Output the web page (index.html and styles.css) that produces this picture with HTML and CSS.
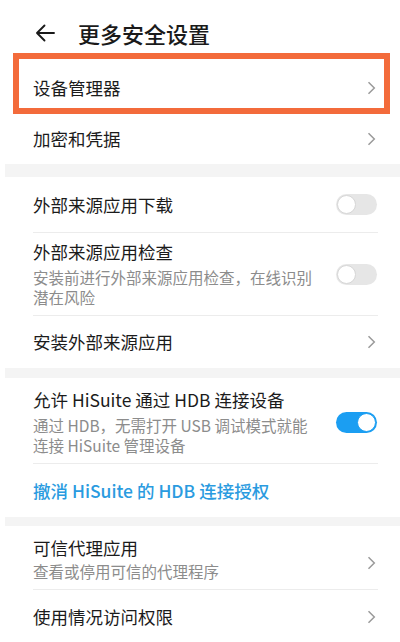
FILE: index.html
```html
<!DOCTYPE html>
<html lang="zh-CN">
<head>
<meta charset="utf-8">
<title>更多安全设置</title>
<link rel="stylesheet" href="styles.css">
</head>
<body>
<div class="page">
  <header class="header">
    <svg class="back" width="20" height="18" viewBox="0 0 20 18" aria-hidden="true">
      <path d="M19 9H2M9.5 1.5L2 9l7.5 7.5" fill="none" stroke="#1a1a1a" stroke-width="1.9" stroke-linecap="round" stroke-linejoin="round"/>
    </svg>
    <h1 class="title">更多安全设置</h1>
  </header>

  <div class="row row-first">
    <span class="label">设备管理器</span>
    <svg class="chev" width="9" height="14" viewBox="0 0 9 14"><path d="M1.5 1.2L7.3 7l-5.8 5.8" fill="none" stroke="#9a9a9a" stroke-width="1.5"/></svg>
    <div class="highlight"></div>
  </div>
  <div class="row row-second">
    <span class="label">加密和凭据</span>
    <svg class="chev" width="9" height="14" viewBox="0 0 9 14"><path d="M1.5 1.2L7.3 7l-5.8 5.8" fill="none" stroke="#9a9a9a" stroke-width="1.5"/></svg>
  </div>

  <div class="band band-a"></div>

  <div class="row row-tall-single">
    <span class="label">外部来源应用下载</span>
    <span class="toggle"><span class="knob"></span></span>
  </div>
  <div class="divider"></div>
  <div class="row row-multi">
    <div class="text">
      <div class="label">外部来源应用检查</div>
      <div class="sub">安装前进行外部来源应用检查，在线识别潜在风险</div>
    </div>
    <span class="toggle"><span class="knob"></span></span>
  </div>
  <div class="divider"></div>
  <div class="row row-install">
    <span class="label">安装外部来源应用</span>
    <svg class="chev" width="9" height="14" viewBox="0 0 9 14"><path d="M1.5 1.2L7.3 7l-5.8 5.8" fill="none" stroke="#9a9a9a" stroke-width="1.5"/></svg>
  </div>

  <div class="band band-b"></div>

  <div class="row row-multi row-hisuite">
    <div class="text">
      <div class="label">允许 HiSuite 通过 HDB 连接设备</div>
      <div class="sub">通过 HDB，无需打开 USB 调试模式就能连接 HiSuite 管理设备</div>
    </div>
    <span class="toggle on"><span class="knob"></span></span>
  </div>
  <div class="divider"></div>
  <div class="row row-link">
    <span class="link">撤消 HiSuite 的 HDB 连接授权</span>
  </div>

  <div class="band band-c"></div>

  <div class="row row-trust">
    <div class="text">
      <div class="label label-trust">可信代理应用</div>
      <div class="sub">查看或停用可信的代理程序</div>
    </div>
    <svg class="chev" width="9" height="14" viewBox="0 0 9 14"><path d="M1.5 1.2L7.3 7l-5.8 5.8" fill="none" stroke="#9a9a9a" stroke-width="1.5"/></svg>
  </div>
  <div class="divider"></div>
  <div class="row row-usage">
    <span class="label">使用情况访问权限</span>
    <svg class="chev" width="9" height="14" viewBox="0 0 9 14"><path d="M1.5 1.2L7.3 7l-5.8 5.8" fill="none" stroke="#9a9a9a" stroke-width="1.5"/></svg>
  </div>
</div>
</body>
</html>
```

FILE: styles.css
```css
html, body {
  margin: 0;
  padding: 0;
  background: #ffffff;
}
body {
  font-family: "Noto Sans CJK SC", "Noto Sans", sans-serif;
  color: #1b1b1b;
  width: 400px;
  height: 642px;
  overflow: hidden;
}
.page {
  width: 400px;
}
.header {
  height: 61px;
  box-sizing: border-box;
  padding: 21px 0 0 35px;
  display: flex;
  align-items: flex-start;
}
.back {
  margin-top: 3px;
  flex: none;
}
.title {
  margin: 0 0 0 23px;
  font-size: 22px;
  line-height: 24px;
  font-weight: 500;
  color: #1a1a1a;
}
.row {
  position: relative;
  display: flex;
  align-items: center;
  justify-content: space-between;
  box-sizing: border-box;
  padding: 0 24px 0 33px;
}
.row-first { height: 54px; }
.row-second { height: 49px; padding-bottom: 2px; }
.row-tall-single { height: 55px; }
.row-install { height: 52px; }
.row-link { height: 53px; }
.row-usage { height: 54px; }
.label {
  font-size: 17.5px;
  line-height: 20px;
  color: #1b1b1b;
}
.chev {
  flex: none;
  display: block;
}
.highlight {
  position: absolute;
  left: 13px;
  top: -8px;
  width: 377px;
  height: 61px;
  box-sizing: border-box;
  border: 6px solid #f36b3b;
  pointer-events: none;
}
.band {
  margin-left: 5px;
  background: #f4f4f4;
}
.band-a { height: 13px; }
.band-b { height: 10px; }
.band-c { height: 9px; }
.divider {
  height: 1px;
  margin: 0 22px 0 33px;
  background: #ececec;
}
.row-multi {
  padding-top: 9px;
  padding-bottom: 8px;
  align-items: center;
}
.row-hisuite {
  padding-top: 12px;
}
.text {
  width: 286px;
  flex: none;
}
.sub {
  margin-top: 5px;
  font-size: 15.5px;
  line-height: 20px;
  color: #8c8c8c;
}
.toggle {
  flex: none;
  position: relative;
  width: 41px;
  height: 21px;
  border-radius: 11px;
  background: #e6e6e6;
  margin-right: -1px;
}
.knob {
  position: absolute;
  top: 1px;
  left: 1px;
  width: 19px;
  height: 19px;
  box-sizing: border-box;
  border-radius: 50%;
  background: #ffffff;
  border: 1px solid #d6d6d6;
}
.toggle.on {
  background: #1b9ef2;
}
.toggle.on .knob {
  left: 21px;
  border: 1.5px solid #1b9ef2;
  width: 19px;
  height: 19px;
}
.link {
  font-size: 17.5px;
  line-height: 20px;
  font-weight: 500;
  color: #2a9be0;
}
.row-trust {
  padding-top: 11px;
  padding-bottom: 8px;
}
.label-trust {
  line-height: 22px;
}
.row-trust .sub {
  margin-top: 2px;
}
.row-trust .chev {
  margin-top: 8px;
}
```
